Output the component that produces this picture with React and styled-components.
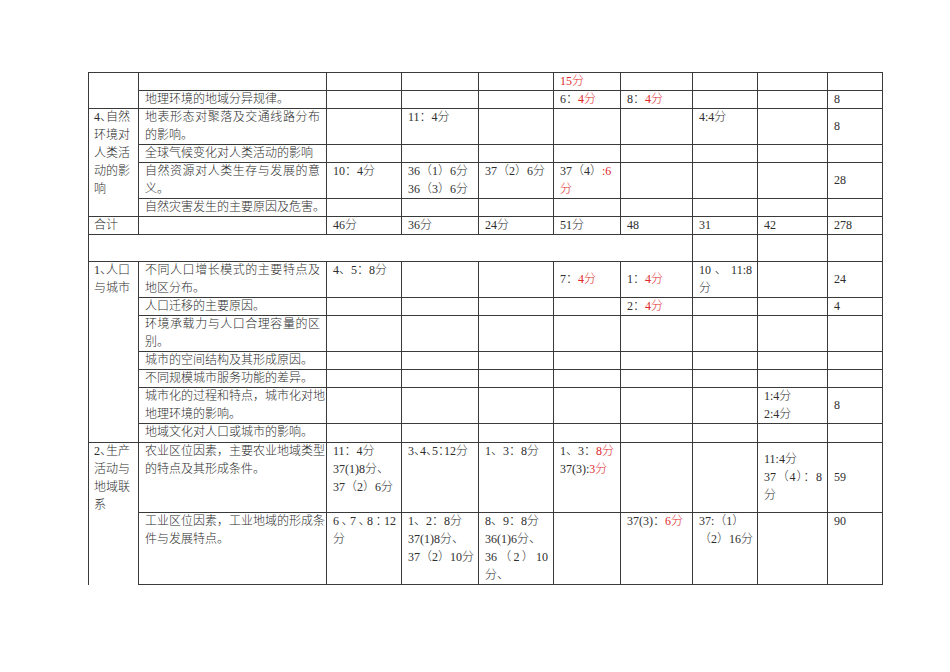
import React from "react";
import styled, { createGlobalStyle } from "styled-components";

const GlobalStyle = createGlobalStyle`
    html, body {
        margin: 0;
        padding: 0;
        background: #ffffff;
    }
    body {
        font-family: "Liberation Serif", "Noto Sans CJK SC", serif;
        color: #2e2e2e;
    }
`;

const widths = [50, 188, 75, 77, 75, 67, 72, 65, 70, 55];

// one printed line of a cell; `j` stretches it to the cell width, `t` halves CJK punctuation
function L({ j, t, children }) {
    return (
        <Ln $j={j} $t={t}>
            {children}
        </Ln>
    );
}

function EmptyCells({ count }) {
    const cells = [];
    for (let i = 0; i < count; i++) cells.push(<Cell key={i} />);
    return cells;
}

export default function App() {
    return (
        <Page>
            <GlobalStyle />
            <Sheet>
                <colgroup>
                    {widths.map((w, i) => (
                        <col key={i} style={{ width: w }} />
                    ))}
                </colgroup>
                <tbody>
                    <Row $h={18}>
                        <TopicCell rowSpan={2} />
                        <TextCell />
                        <Cell />
                        <Cell />
                        <Cell />
                        <Cell>
                            <L>
                                <Red>15分</Red>
                            </L>
                        </Cell>
                        <EmptyCells count={4} />
                    </Row>
                    <Row $h={18}>
                        <TextCell>
                            <L>地理环境的地域分异规律。</L>
                        </TextCell>
                        <Cell />
                        <Cell />
                        <Cell />
                        <Cell>
                            <L>
                                6：<Red>4分</Red>
                            </L>
                        </Cell>
                        <Cell>
                            <L>
                                8：<Red>4分</Red>
                            </L>
                        </Cell>
                        <Cell />
                        <Cell />
                        <Cell>
                            <L>8</L>
                        </Cell>
                    </Row>
                    <Row $h={36}>
                        <TopicCell rowSpan={4}>
                            <L t>4、自然</L>
                            <L>环境对</L>
                            <L>人类活</L>
                            <L>动的影</L>
                            <L>响</L>
                        </TopicCell>
                        <TextCell>
                            <L j>地表形态对聚落及交通线路分布</L>
                            <L>的影响。</L>
                        </TextCell>
                        <Cell />
                        <Cell>
                            <L>11：4分</L>
                        </Cell>
                        <Cell />
                        <Cell />
                        <Cell />
                        <Cell>
                            <L>4:4分</L>
                        </Cell>
                        <Cell />
                        <Cell $mid>
                            <L>8</L>
                        </Cell>
                    </Row>
                    <Row $h={18}>
                        <TextCell>
                            <L>全球气候变化对人类活动的影响</L>
                        </TextCell>
                        <EmptyCells count={8} />
                    </Row>
                    <Row $h={36}>
                        <TextCell>
                            <L j>自然资源对人类生存与发展的意</L>
                            <L>义。</L>
                        </TextCell>
                        <Cell>
                            <L>10：4分</L>
                        </Cell>
                        <Cell>
                            <L>36（1）6分</L>
                            <L>36（3）6分</L>
                        </Cell>
                        <Cell>
                            <L>37（2）6分</L>
                        </Cell>
                        <Cell>
                            <L>
                                37（4）<Red>:6</Red>
                            </L>
                            <L>
                                <Red>分</Red>
                            </L>
                        </Cell>
                        <Cell />
                        <Cell />
                        <Cell />
                        <Cell $mid>
                            <L>28</L>
                        </Cell>
                    </Row>
                    <Row $h={18}>
                        <TextCell>
                            <L>自然灾害发生的主要原因及危害。</L>
                        </TextCell>
                        <EmptyCells count={8} />
                    </Row>
                    <Row $h={18}>
                        <TopicCell>
                            <L>合计</L>
                        </TopicCell>
                        <TextCell />
                        <Cell>
                            <L>46分</L>
                        </Cell>
                        <Cell>
                            <L>36分</L>
                        </Cell>
                        <Cell>
                            <L>24分</L>
                        </Cell>
                        <Cell>
                            <L>51分</L>
                        </Cell>
                        <Cell>
                            <L>48</L>
                        </Cell>
                        <Cell>
                            <L>31</L>
                        </Cell>
                        <Cell>
                            <L>42</L>
                        </Cell>
                        <Cell>
                            <L>278</L>
                        </Cell>
                    </Row>
                    <Row $h={27}>
                        <Cell colSpan={7} />
                        <Cell />
                        <Cell />
                        <Cell />
                    </Row>
                    <Row $h={36}>
                        <TopicCell rowSpan={7}>
                            <L t>1、人口</L>
                            <L>与城市</L>
                        </TopicCell>
                        <TextCell>
                            <L j>不同人口增长模式的主要特点及</L>
                            <L>地区分布。</L>
                        </TextCell>
                        <Cell>
                            <L>4、5：8分</L>
                        </Cell>
                        <Cell />
                        <Cell />
                        <Cell $mid>
                            <L>
                                7：<Red>4分</Red>
                            </L>
                        </Cell>
                        <Cell $mid>
                            <L>
                                1：<Red>4分</Red>
                            </L>
                        </Cell>
                        <Cell>
                            <L j>10 、 11:8</L>
                            <L>分</L>
                        </Cell>
                        <Cell />
                        <Cell $mid>
                            <L>24</L>
                        </Cell>
                    </Row>
                    <Row $h={18}>
                        <TextCell>
                            <L>人口迁移的主要原因。</L>
                        </TextCell>
                        <Cell />
                        <Cell />
                        <Cell />
                        <Cell />
                        <Cell>
                            <L>
                                2：<Red>4分</Red>
                            </L>
                        </Cell>
                        <Cell />
                        <Cell />
                        <Cell>
                            <L>4</L>
                        </Cell>
                    </Row>
                    <Row $h={36}>
                        <TextCell>
                            <L j>环境承载力与人口合理容量的区</L>
                            <L>别。</L>
                        </TextCell>
                        <EmptyCells count={8} />
                    </Row>
                    <Row $h={18} $light>
                        <TextCell>
                            <L>城市的空间结构及其形成原因。</L>
                        </TextCell>
                        <EmptyCells count={8} />
                    </Row>
                    <Row $h={18} $light>
                        <TextCell>
                            <L>不同规模城市服务功能的差异。</L>
                        </TextCell>
                        <EmptyCells count={8} />
                    </Row>
                    <Row $h={36}>
                        <TextCell>
                            <L j>城市化的过程和特点，城市化对地</L>
                            <L>地理环境的影响。</L>
                        </TextCell>
                        <EmptyCells count={6} />
                        <Cell $mid>
                            <L>1:4分</L>
                            <L>2:4分</L>
                        </Cell>
                        <Cell $mid>
                            <L>8</L>
                        </Cell>
                    </Row>
                    <Row $h={19}>
                        <TextCell>
                            <L>地域文化对人口或城市的影响。</L>
                        </TextCell>
                        <EmptyCells count={8} />
                    </Row>
                    <Row $h={70}>
                        <TopicCell rowSpan={2} $open>
                            <L t>2、生产</L>
                            <L>活动与</L>
                            <L>地域联</L>
                            <L>系</L>
                        </TopicCell>
                        <TextCell>
                            <L j>农业区位因素，主要农业地域类型</L>
                            <L>的特点及其形成条件。</L>
                        </TextCell>
                        <Cell>
                            <L>11：4分</L>
                            <L>37(1)8分、</L>
                            <L>37（2）6分</L>
                        </Cell>
                        <Cell>
                            <L t>3、4、5：12分</L>
                        </Cell>
                        <Cell>
                            <L>1、3：8分</L>
                        </Cell>
                        <Cell>
                            <L>
                                1、3：<Red>8分</Red>
                            </L>
                            <L>
                                37(3):<Red>3分</Red>
                            </L>
                        </Cell>
                        <Cell />
                        <Cell />
                        <Cell $mid>
                            <L>11:4分</L>
                            <L j>37（4）：8</L>
                            <L>分</L>
                        </Cell>
                        <Cell $mid>
                            <L>59</L>
                        </Cell>
                    </Row>
                    <Row $h={71}>
                        <TextCell>
                            <L j>工业区位因素，工业地域的形成条</L>
                            <L>件与发展特点。</L>
                        </TextCell>
                        <Cell>
                            <L j t>
                                6、7、8：12
                            </L>
                            <L>分</L>
                        </Cell>
                        <Cell>
                            <L>1、2：8分</L>
                            <L>37(1)8分、</L>
                            <L>37（2）10分</L>
                        </Cell>
                        <Cell>
                            <L>8、9：8分</L>
                            <L>36(1)6分、</L>
                            <L j>36（2）10</L>
                            <L>分、</L>
                        </Cell>
                        <Cell />
                        <Cell>
                            <L>
                                37(3)：<Red>6分</Red>
                            </L>
                        </Cell>
                        <Cell>
                            <L>37:（1）</L>
                            <L>（2）16分</L>
                        </Cell>
                        <Cell />
                        <Cell>
                            <L>90</L>
                        </Cell>
                    </Row>
                </tbody>
            </Sheet>
        </Page>
    );
}

const Page = styled.div`
    width: 950px;
    height: 672px;
    padding: 72px 0 0 88px;
    box-sizing: border-box;
    background: #ffffff;
    overflow: hidden;
`;

const Sheet = styled.table`
    width: 795px;
    table-layout: fixed;
    border-collapse: collapse;
    font-size: 12px;
    line-height: 17px;
`;

const Row = styled.tr`
    height: ${(p) => p.$h}px;
    td {
        border-top-color: ${(p) => (p.$light ? "#9a9a9a" : "#3a3a3a")};
    }
`;

const Cell = styled.td`
    border: 1px solid #3a3a3a;
    padding: 0 5px 0 6px;
    vertical-align: ${(p) => (p.$mid ? "middle" : "top")};
    white-space: nowrap;
    overflow: visible;
`;

const TextCell = styled(Cell)`
    padding: 0 6px 0 6px;
`;

const TopicCell = styled(Cell)`
    padding: 0 3px 0 5px;
    border-bottom-color: ${(p) => (p.$open ? "transparent" : "#3a3a3a")};
`;

const Ln = styled.span`
    display: block;
    height: 17px;
    line-height: 17px;
    overflow: visible;
    white-space: nowrap;
    font-weight: 300;
    font-feature-settings: ${(p) => (p.$t ? '"halt"' : "normal")};
    text-align: ${(p) => (p.$j ? "justify" : "left")};
    text-align-last: ${(p) => (p.$j ? "justify" : "auto")};
    &:not(:last-child) {
        height: 18px;
    }
`;

const Red = styled.span`
    color: #e0282a;
`;
